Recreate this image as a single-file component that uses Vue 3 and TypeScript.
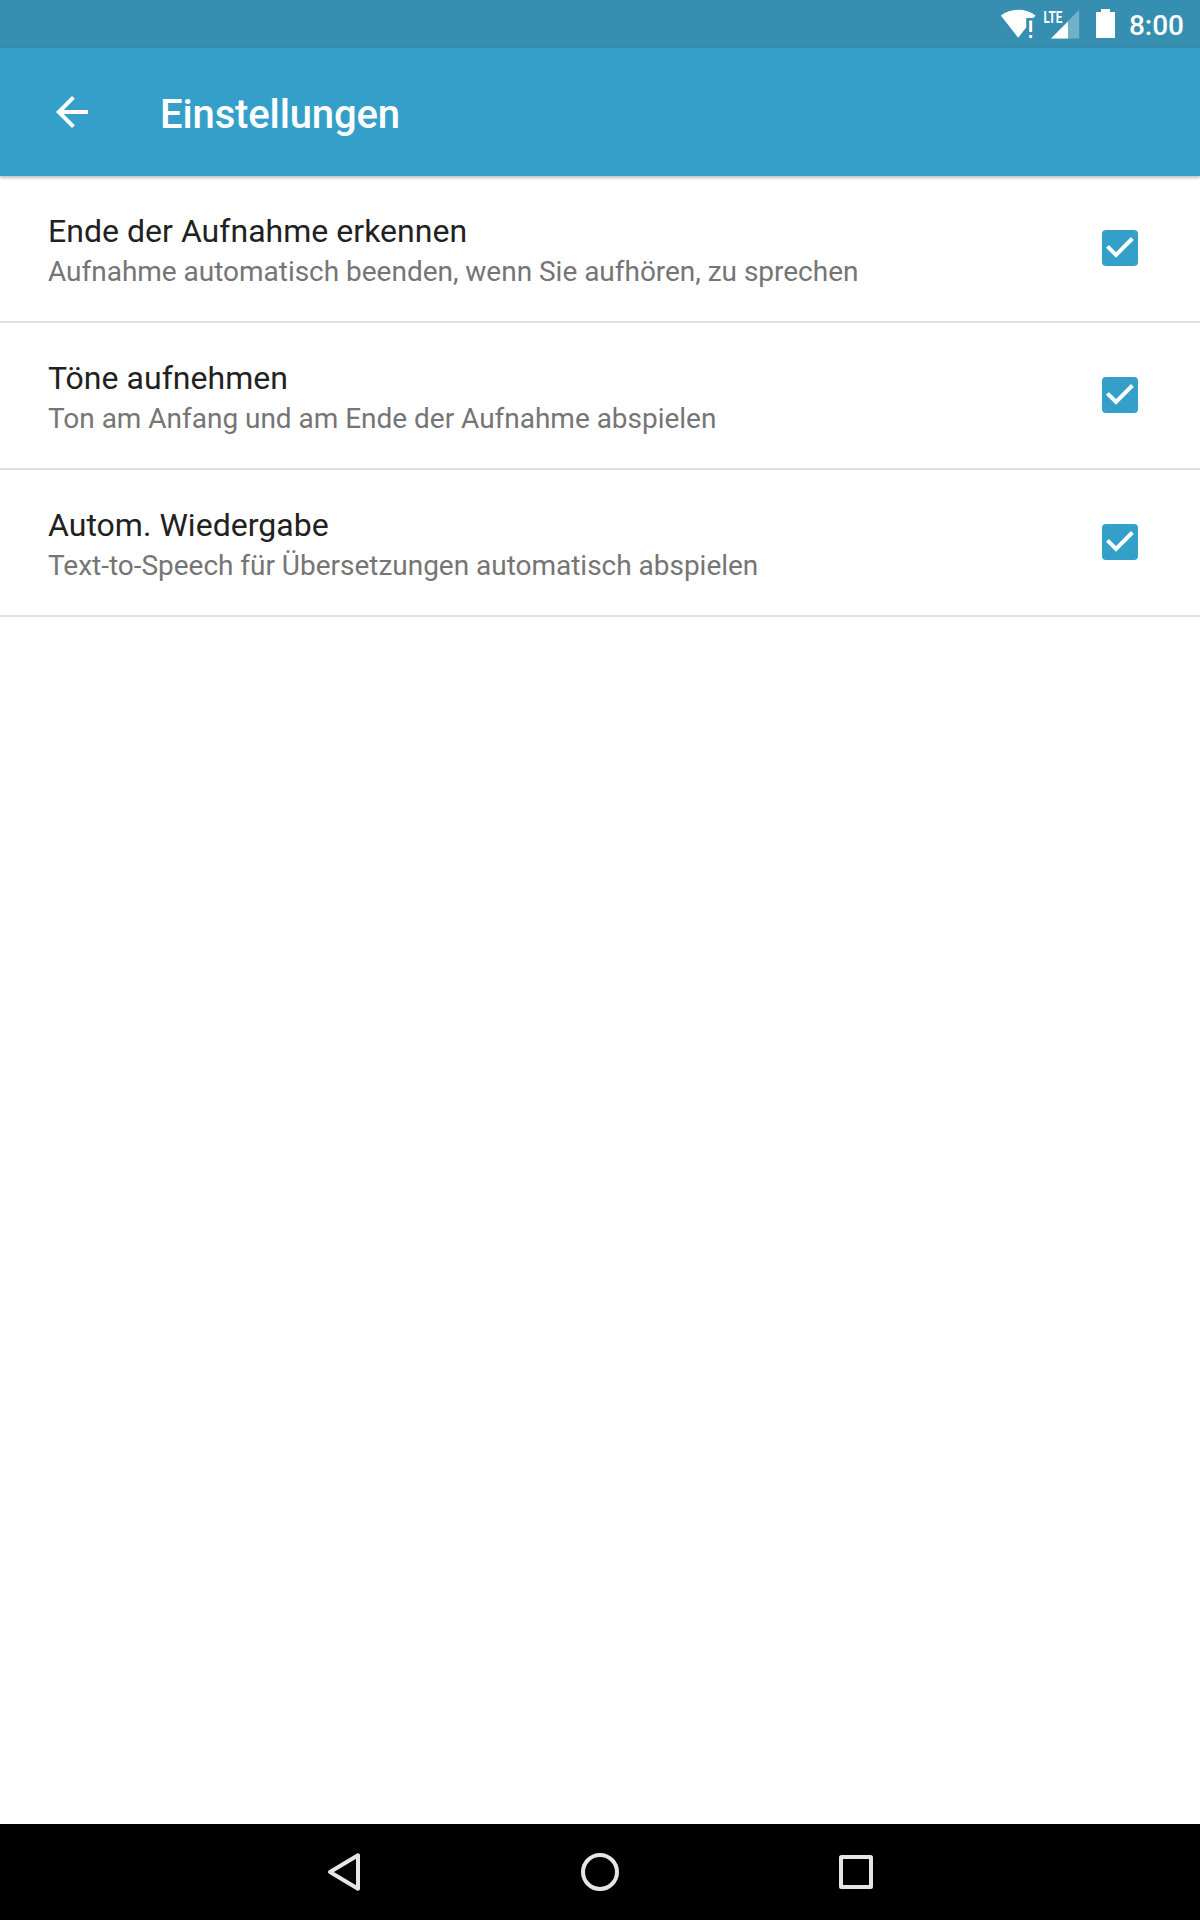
<template>
	<div class="screen">
		<header class="status-bar">
			<svg class="status-icons" viewBox="0 0 120 48">
				<path
					d="M0.8 15.6C10.5 7.9 26 7.9 35.6 15.6L33.4 18H26.2V27.6L18.2 37.8Z"
					fill="#fff"
				/>
				<path d="M29.2 20.6H32.2V32H29.2ZM29.2 35H32.2V38H29.2Z" fill="#fff" />
				<path d="M51 38.4L79.2 9.8V38.4Z" fill="#fff" fill-opacity="0.3" />
				<path d="M51 38.4L68 21.4V38.4Z" fill="#fff" />
				<path d="M96 12H101V9H110V12H115V38H96Z" fill="#fff" />
				<text class="network-type" x="43.4" y="22.8" textLength="18.8" lengthAdjust="spacingAndGlyphs">LTE</text>
			</svg>
			<span class="clock">8:00</span>
		</header>
		<div class="app-bar">
			<button class="back-button" aria-label="Zurück">
				<svg viewBox="0 0 24 24" width="48" height="48">
					<path d="M20 11H7.83l5.59-5.59L12 4l-8 8 8 8 1.41-1.41L7.83 13H20v-2z" fill="#fff" />
				</svg>
			</button>
			<h1 class="app-title">Einstellungen</h1>
		</div>
		<main class="settings">
			<div v-for="item in settings" :key="item.title" class="setting" @click="toggle(item)">
				<div class="setting-text">
					<div class="setting-title">{{ item.title }}</div>
					<div class="setting-summary">{{ item.summary }}</div>
				</div>
				<svg class="checkbox" viewBox="0 0 36 36">
					<template v-if="item.checked">
						<rect width="36" height="36" rx="4" fill="#34a0ca" />
						<path d="M5.4 16.3L14 24.9L30.4 8.5" fill="none" stroke="#fff" stroke-width="4" />
					</template>
					<rect v-else x="2" y="2" width="32" height="32" rx="2" fill="none" stroke="#757575" stroke-width="4" />
				</svg>
			</div>
		</main>
		<nav class="nav-bar">
			<svg class="nav-icon" viewBox="0 0 48 48">
				<path d="M10 24L38 7.3V40.7Z" />
			</svg>
			<svg class="nav-icon" viewBox="0 0 48 48">
				<circle cx="24" cy="24" r="17" />
			</svg>
			<svg class="nav-icon" viewBox="0 0 48 48">
				<rect x="9" y="9" width="30" height="30" rx="0.5" />
			</svg>
		</nav>
	</div>
</template>
<script setup lang="ts">
import { ref } from "vue";

interface Setting {
	title: string;
	summary: string;
	checked: boolean;
}

const settings = ref<Setting[]>([
	{
		title: "Ende der Aufnahme erkennen",
		summary: "Aufnahme automatisch beenden, wenn Sie aufhören, zu sprechen",
		checked: true,
	},
	{
		title: "Töne aufnehmen",
		summary: "Ton am Anfang und am Ende der Aufnahme abspielen",
		checked: true,
	},
	{
		title: "Autom. Wiedergabe",
		summary: "Text-to-Speech für Übersetzungen automatisch abspielen",
		checked: true,
	},
]);

const toggle = (item: Setting) => {
	item.checked = !item.checked;
};
</script>
<style>
body {
	margin: 0;
}
</style>
<style scoped>
.screen {
	display: flex;
	flex-direction: column;
	height: 100vh;
	background-color: #fff;
	font-family: Roboto, sans-serif;
}

.status-bar {
	display: flex;
	align-items: center;
	justify-content: flex-end;
	gap: 9px;
	height: 48px;
	padding-right: 16px;
	box-sizing: border-box;
	background-color: #368eb1;
	color: #fff;
}

.status-icons {
	width: 120px;
	height: 48px;
}

.network-type {
	font-size: 17px;
	font-weight: 700;
	fill: #fff;
}

.clock {
	font-size: 28px;
	font-weight: 500;
	line-height: 48px;
	padding-top: 3px;
}

.app-bar {
	display: flex;
	align-items: center;
	gap: 64px;
	height: 128px;
	padding-left: 48px;
	box-sizing: border-box;
	background-color: #34a0ca;
	box-shadow: 0 2px 3px rgba(0, 0, 0, 0.25);
}

.back-button {
	display: flex;
	width: 48px;
	padding: 0;
	border: none;
	background: none;
}

.app-title {
	margin: 0;
	padding-top: 6px;
	color: #fff;
	font-size: 40px;
	font-weight: 500;
	line-height: 48px;
	letter-spacing: -0.13px;
}

.settings {
	flex: 1;
}

.setting {
	display: flex;
	align-items: flex-start;
	justify-content: space-between;
	height: 147px;
	padding: 34px 62px 0 48px;
	box-sizing: border-box;
	border-bottom: 2px solid #e0e0e0;
}

.setting-title {
	color: #212121;
	font-size: 32px;
	line-height: 42px;
	letter-spacing: 0.03px;
}

.setting-summary {
	color: #757575;
	font-size: 28px;
	line-height: 40px;
	letter-spacing: -0.02px;
}

.checkbox {
	width: 36px;
	height: 36px;
	margin-top: 20px;
}

.nav-bar {
	display: flex;
	align-items: center;
	justify-content: center;
	gap: 208px;
	height: 96px;
	background-color: #000;
}

.nav-icon {
	width: 48px;
	height: 48px;
	fill: none;
	stroke: #e6e6e6;
	stroke-width: 4;
	stroke-linejoin: round;
}
</style>
